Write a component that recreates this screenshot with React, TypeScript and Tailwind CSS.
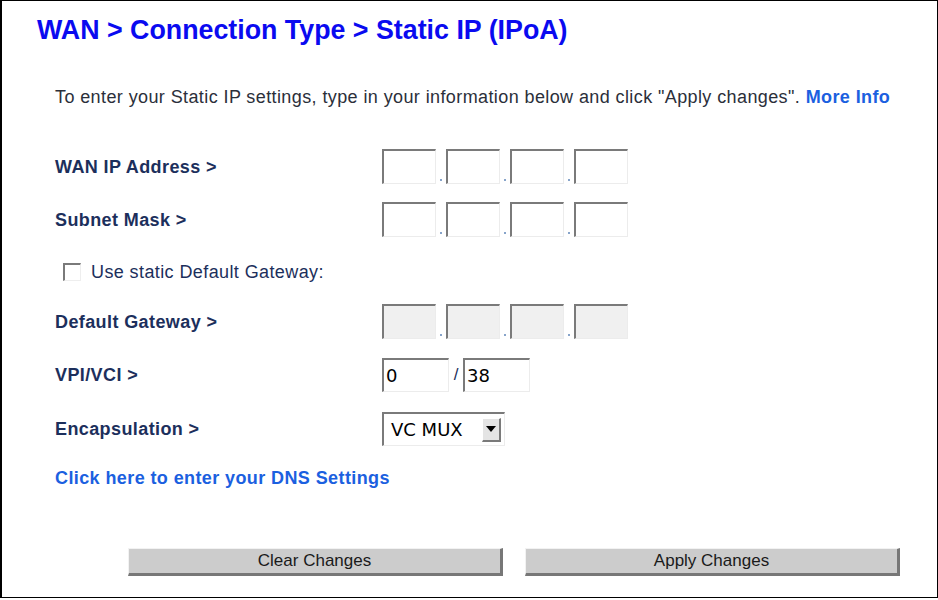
import React from "react";

const font = { fontFamily: '"Liberation Sans", Arial, sans-serif' };

function IpBox({ disabled }: { disabled?: boolean }) {
  return (
    <div
      className={`w-[54px] h-[35px] border-l-2 border-t-2 border-r border-b border-l-[#7a7a7a] border-t-[#7a7a7a] border-r-[#ececec] border-b-[#ececec] ${
        disabled ? "bg-[#f0f0f0]" : "bg-white"
      }`}
    />
  );
}

function Dot() {
  return (
    <div className="w-[10px] h-[35px] flex items-end justify-center pb-[3px]">
      <div className="w-[2px] h-[2px] rounded-full bg-[#5f86b8]" />
    </div>
  );
}

function IpRow({ disabled }: { disabled?: boolean }) {
  return (
    <div className="flex items-center">
      <IpBox disabled={disabled} />
      <Dot />
      <IpBox disabled={disabled} />
      <Dot />
      <IpBox disabled={disabled} />
      <Dot />
      <IpBox disabled={disabled} />
    </div>
  );
}

function Label({ children }: { children: React.ReactNode }) {
  return (
    <div className="w-[327px] text-[18px] tracking-[0.4px] font-bold text-[#1c2f5c] leading-[22px]">
      {children}
    </div>
  );
}

export default function App() {
  return (
    <div className="w-[938px] h-[600px] bg-white" style={font}>
      <div className="w-[938px] h-[598px] border-t border-l-2 border-r border-b border-black bg-white pl-[35px]">
        <div className="mt-[14px] h-[30px] leading-[30px] text-[26.8px] font-bold text-[#0a0af0]">
          WAN &gt; Connection Type &gt; Static IP (IPoA)
        </div>
        <div className="ml-[18px]">
          <div className="mt-[41px] h-[22px] leading-[22px] text-[18px] tracking-[0.4px] text-[#2b2f3a]">
            To enter your Static IP settings, type in your information below and click "Apply changes".{" "}
            <span className="font-bold text-[#1b60e0]">More Info</span>
          </div>

          <div className="mt-[41px] flex items-center h-[35px]">
            <Label>WAN IP Address &gt;</Label>
            <IpRow />
          </div>

          <div className="mt-[18px] flex items-center h-[35px]">
            <Label>Subnet Mask &gt;</Label>
            <IpRow />
          </div>

          <div className="mt-[25px] flex items-center h-[20px] pl-[8px]">
            <div className="w-[18px] h-[18px] border-l-2 border-t-2 border-r border-b border-l-[#7a7a7a] border-t-[#7a7a7a] border-r-[#eeeeee] border-b-[#eeeeee] bg-white" />
            <div className="ml-[10px] text-[18px] tracking-[0.4px] text-[#1c2f5c] leading-[22px]">
              Use static Default Gateway:
            </div>
          </div>

          <div className="mt-[22px] flex items-center h-[35px]">
            <Label>Default Gateway &gt;</Label>
            <IpRow disabled />
          </div>

          <div className="mt-[19px] flex items-center h-[34px]">
            <Label>VPI/VCI &gt;</Label>
            <div className="flex items-center">
              <div
                className="w-[67px] h-[34px] border-l-2 border-t-2 border-r border-b border-l-[#7a7a7a] border-t-[#7a7a7a] border-r-[#ececec] border-b-[#ececec] bg-white flex items-center pl-[2px] text-[18px] text-black"
                style={{ fontFamily: '"DejaVu Sans", "Open Sans", sans-serif' }}
              >
                0
              </div>
              <div className="w-[14px] text-center text-[17px] text-[#1c2f5c]">/</div>
              <div
                className="w-[67px] h-[34px] border-l-2 border-t-2 border-r border-b border-l-[#7a7a7a] border-t-[#7a7a7a] border-r-[#ececec] border-b-[#ececec] bg-white flex items-center pl-[2px] text-[18px] text-black"
                style={{ fontFamily: '"DejaVu Sans", "Open Sans", sans-serif' }}
              >
                38
              </div>
            </div>
          </div>

          <div className="mt-[20px] flex items-center h-[34px]">
            <Label>Encapsulation &gt;</Label>
            <div
              className="w-[123px] h-[34px] border-l-2 border-t-2 border-r border-b border-l-[#7a7a7a] border-t-[#7a7a7a] border-r-[#ececec] border-b-[#ececec] bg-white flex items-center pl-[7px] pr-[3px] text-[18px] text-black"
              style={{ fontFamily: '"DejaVu Sans", "Open Sans", sans-serif' }}
            >
              <span className="flex-1">VC MUX</span>
              <div className="w-[19px] h-[24px] bg-[#e4e4e4] border-r-2 border-b-2 border-r-[#7a7a7a] border-b-[#7a7a7a] border-l border-t border-l-white border-t-white flex items-center justify-center">
                <svg width="10" height="6" viewBox="0 0 10 6">
                  <path d="M0 0 L10 0 L5 6 Z" fill="#000" />
                </svg>
              </div>
            </div>
          </div>

          <div className="mt-[21px] h-[22px] leading-[22px] text-[18px] tracking-[0.4px] font-bold text-[#1b60e0]">
            Click here to enter your DNS Settings
          </div>
        </div>

        <div className="mt-[59px] flex pl-[91px] gap-[22px]">
          <div className="w-[375px] h-[28px] bg-[#cccccc] border-l border-t border-l-[#f2f2f2] border-t-[#f2f2f2] border-r-[3px] border-b-[3px] border-r-[#777777] border-b-[#777777] flex items-center justify-center text-[17px] text-[#1a1a1a]">
            Clear Changes
          </div>
          <div className="w-[375px] h-[28px] bg-[#cccccc] border-l border-t border-l-[#f2f2f2] border-t-[#f2f2f2] border-r-[3px] border-b-[3px] border-r-[#777777] border-b-[#777777] flex items-center justify-center text-[17px] text-[#1a1a1a]">
            Apply Changes
          </div>
        </div>
      </div>
    </div>
  );
}
